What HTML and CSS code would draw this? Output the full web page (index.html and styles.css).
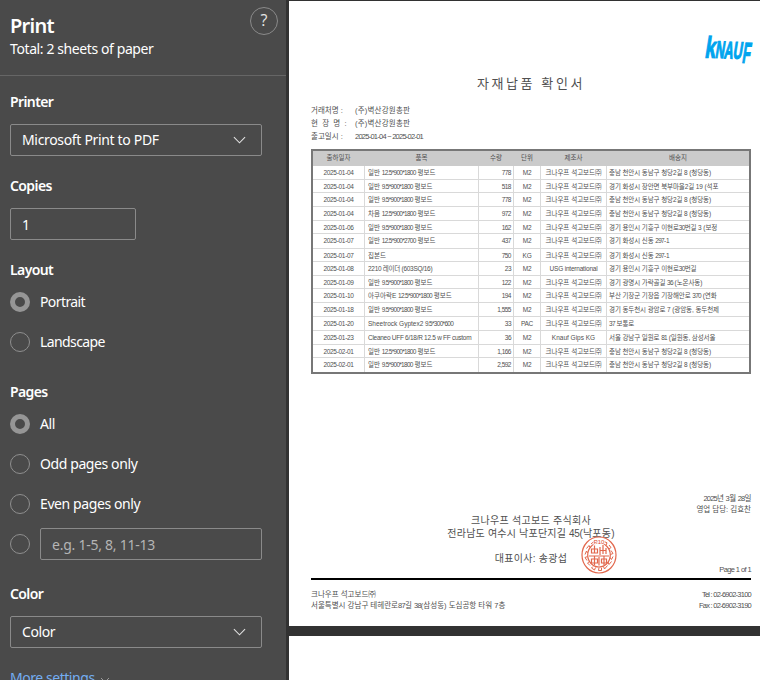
FILE: index.html
```html
<!DOCTYPE html>
<html lang="en">
<head>
<meta charset="utf-8">
<title>Print</title>
<link rel="stylesheet" href="styles.css">
</head>
<body>
<div class="dialog">
<aside class="panel">
  <header class="head">
    <div><h1>Print</h1><p class="total">Total: 2 sheets of paper</p></div>
    <button class="help">?</button>
  </header>
  <section class="group printer">
    <h2>Printer</h2>
    <div class="field select"><span class="v-printer">Microsoft Print to PDF</span><svg class="chev" viewBox="0 0 14 8"><path d="M1 1l6 6 6-6"/></svg></div>
  </section>
  <section class="group">
    <h2>Copies</h2>
    <div class="field copies">1</div>
  </section>
  <section class="group layout">
    <h2>Layout</h2>
    <label class="opt"><i class="radio on"></i><span>Portrait</span></label>
    <label class="opt"><i class="radio"></i><span>Landscape</span></label>
  </section>
  <section class="group pages">
    <h2>Pages</h2>
    <label class="opt"><i class="radio on"></i><span>All</span></label>
    <label class="opt"><i class="radio"></i><span>Odd pages only</span></label>
    <label class="opt"><i class="radio"></i><span>Even pages only</span></label>
    <label class="opt range"><i class="radio"></i><span class="field hint">e.g. 1-5, 8, 11-13</span></label>
  </section>
  <section class="group color">
    <h2>Color</h2>
    <div class="field select"><span>Color</span><svg class="chev" viewBox="0 0 14 8"><path d="M1 1l6 6 6-6"/></svg></div>
  </section>
  <a class="more">More settings <svg viewBox="0 0 10 6"><path d="M1 1l4 4 4-4"/></svg></a>
</aside>
<main class="preview">
  <article class="sheet">
    <div class="brand"><svg viewBox="0 0 50 34" width="50" height="34"><g transform="rotate(2) skewX(-7)"><text x="4" y="24.5" class="logo-k" textLength="10.5" lengthAdjust="spacingAndGlyphs">k</text><text x="14.5" y="24.5" class="logo-t" textLength="27" lengthAdjust="spacingAndGlyphs">NAU</text><text x="42" y="28.5" class="logo-f" textLength="8" lengthAdjust="spacingAndGlyphs">F</text></g></svg></div>
    <h3 class="title">자재납품 확인서</h3>
    <dl class="meta">
      <dt>거래처명 :</dt><dd>(주)벽산강원총판</dd>
      <dt class="wide">현 장 명 :</dt><dd>(주)벽산강원총판</dd>
      <dt>출고일시 :</dt><dd class="dates">2025-01-04 ~ 2025-02-01</dd>
    </dl>
    <div class="table">
      <div class="row th"><b>출하일자</b><b>품목</b><b>수량</b><b>단위</b><b>제조사</b><b>배송지</b></div>
      <div class="row"><span>2025-01-04</span><span>일반 <u>12.5*900*1800</u> 평보드</span><span>778</span><span>M2</span><span>크나우프 석고보드㈜</span><span>충남 천안시 동남구 청당2길 8 (청당동)</span></div>
      <div class="row s"><span>2025-01-04</span><span>일반 <u>9.5*900*1800</u> 평보드</span><span>518</span><span>M2</span><span>크나우프 석고보드㈜</span><span>경기 화성시 장안면 북부마을2길 19 (석포</span></div>
      <div class="row"><span>2025-01-04</span><span>일반 <u>9.5*900*1800</u> 평보드</span><span>778</span><span>M2</span><span>크나우프 석고보드㈜</span><span>충남 천안시 동남구 청당2길 8 (청당동)</span></div>
      <div class="row"><span>2025-01-04</span><span>차음 <u>12.5*900*1800</u> 평보드</span><span>972</span><span>M2</span><span>크나우프 석고보드㈜</span><span>충남 천안시 동남구 청당2길 8 (청당동)</span></div>
      <div class="row s"><span>2025-01-06</span><span>일반 <u>9.5*900*1800</u> 평보드</span><span>162</span><span>M2</span><span>크나우프 석고보드㈜</span><span>경기 용인시 기흥구 이현로<u>30</u>번길 3 (보정</span></div>
      <div class="row l"><span>2025-01-07</span><span>일반 <u>12.5*900*2700</u> 평보드</span><span>437</span><span>M2</span><span>크나우프 석고보드㈜</span><span>경기 화성시 신동 <u>297</u>-1</span></div>
      <div class="row s"><span>2025-01-07</span><span>집본드</span><span>750</span><span>KG</span><span>크나우프 석고보드㈜</span><span>경기 화성시 신동 <u>297</u>-1</span></div>
      <div class="row"><span>2025-01-08</span><span class="lat">2210 레이더 (603SQ/16)</span><span>23</span><span>M2</span><span class="usg">USG international</span><span>경기 용인시 기흥구 이현로<u>30</u>번길</span></div>
      <div class="row s"><span>2025-01-09</span><span>일반 <u>9.5*900*1800</u> 평보드</span><span>122</span><span>M2</span><span>크나우프 석고보드㈜</span><span>경기 광명시 가락골길 <u>36</u> (노온사동)</span></div>
      <div class="row"><span>2025-01-10</span><span>아쿠아락E <u>12.5*900*1800</u> 평보드</span><span>194</span><span>M2</span><span>크나우프 석고보드㈜</span><span>부산 기장군 기장읍 기장해안로 <u>370</u> (연화</span></div>
      <div class="row"><span>2025-01-18</span><span>일반 <u>9.5*900*1800</u> 평보드</span><span>1,555</span><span>M2</span><span>크나우프 석고보드㈜</span><span>경기 동두천시 광암로 7 (광암동, 동두천제</span></div>
      <div class="row"><span>2025-01-20</span><span>Sheetrock Gyptex2 <u>9.5*300*600</u></span><span>33</span><span>PAC</span><span>크나우프 석고보드㈜</span><span><u>37</u> 보통로</span></div>
      <div class="row"><span>2025-01-23</span><span class="lat">Cleaneo UFF 6/18/R 12.5 w FF custom</span><span>36</span><span>M2</span><span>Knauf Gips KG</span><span>서울 강남구 일원로 <u>81</u> (일원동, 삼성서울</span></div>
      <div class="row s"><span>2025-02-01</span><span>일반 <u>12.5*900*1800</u> 평보드</span><span>1,166</span><span>M2</span><span>크나우프 석고보드㈜</span><span>충남 천안시 동남구 청당2길 8 (청당동)</span></div>
      <div class="row"><span>2025-02-01</span><span>일반 <u>9.5*900*1800</u> 평보드</span><span>2,592</span><span>M2</span><span>크나우프 석고보드㈜</span><span>충남 천안시 동남구 청당2길 8 (청당동)</span></div>
    </div>
    <div class="issued"><p class="day"><u>2025</u>년 3월 <u>28</u>일</p><p>영업 담당: 김효찬</p></div>
    <div class="sign">
      <p>크나우프 석고보드 주식회사</p>
      <p class="site">전라남도 여수시 낙포단지길 <em>45</em>(낙포동)</p>
      <p class="ceo">대표이사: 송광섭</p>
      <svg class="stamp" viewBox="0 0 36 38">
        <ellipse cx="18" cy="19" rx="17" ry="18"/>
        <ellipse cx="18" cy="19" rx="11.3" ry="12"/>
        <path class="marks" d="M23 5.500l3 1.300-1 2.500M28 9l2 2.500-2 1.500M30 14.500l2 3-2.500 1M32 20.500l-1.500 3-1.500-2M30.500 25.500l-2.500 3-1-2.500M26.500 29.500l-3 3.500-1-2.500M20.500 32v2.500h-3l.5-3M14.500 31.500l-1 2.500-3-2 1.500-1.500M9 29.500l-2.500-2.500 2-1.500M6 24.500l-2-3 2.500-1M4 18.500l1.500-3.500 1 2M5.500 12.500l2.500-3 1 2M10 8l3-2.500.5 2.500"/>
        <path d="M10.500 13h6v4h-6zM13.500 9.500v7.500M19 11v8M22 9v9M25 12v6M19 14.500h6M8 20h20M10.500 23h6v4h-6zM18 21v8.500M20.500 23h5v4h-5zM13.500 20v9M23 20v9"/>
        <text x="18" y="7.700" text-anchor="middle">P10</text>
      </svg>
    </div>
    <p class="pageno">Page 1 of 1</p>
    <footer class="foot">
      <div class="addr"><p>크나우프 석고보드㈜</p><p>서울특별시 강남구 테헤란로<u>87</u>길 <u>38</u>(삼성동) 도심공항 타워 7층</p></div>
      <div class="tel"><p>Tel : 02-6902-3100</p><p>Fax : 02-6902-3190</p></div>
    </footer>
  </article>
  <article class="sheet next"></article>
</main>
</div>
</body>
</html>
```
FILE: styles.css
```css
* { box-sizing: border-box; margin: 0; padding: 0; }
html, body { height: 680px; overflow: hidden; }
body { background: #323232; }
p, h1, h2, h3, a { display: block; white-space: nowrap; }

.dialog { display: flex; width: 760px; height: 680px; overflow: hidden; }

/* settings panel */
.panel {
  width: 286px; height: 680px; flex: none; overflow: hidden;
  background: #4a4a4a; color: #fff;
  font: 14px/20px "Noto Sans", "Open Sans", sans-serif;
  letter-spacing: -0.4px;
}
.head {
  display: flex; justify-content: space-between;
  height: 76px; padding: 12px 8px 0 10px; border-bottom: 1px solid #666;
}
h1 { font-size: 20px; line-height: 28px; font-weight: 600; letter-spacing: -0.7px; }
.total { line-height: 18px; }
.help {
  width: 28px; height: 28px; margin-top: -5px; padding-bottom: 2px;
  border: 1px solid #8a8a8a; border-radius: 50%;
  background: none; color: #e6e6e6; font: 16px/22px "Open Sans", sans-serif;
}
.group { padding: 0 24px 0 10px; margin-top: 20px; }
.printer { margin-top: 16px; }
h2 { font-size: 14px; line-height: 20px; font-weight: 600; letter-spacing: -0.6px; }
.field {
  display: flex; align-items: center; height: 32px; margin-top: 12px;
  padding: 0 11px; border: 1px solid #8a8a8a; border-radius: 2px;
}
.select { justify-content: space-between; padding-right: 15px; }
.v-printer { letter-spacing: -0.33px; }
.chev { width: 13px; height: 8px; fill: none; stroke: #e0e0e0; stroke-width: 1.2; }
.copies { width: 126px; padding-top: 1px; }
.opt { display: flex; align-items: center; gap: 10px; height: 20px; margin-top: 20px; }
.layout .opt { letter-spacing: -0.6px; }
h2 + .opt { margin-top: 12px; }
.radio { width: 20px; height: 20px; flex: none; border: 1px solid #8f8f8f; border-radius: 50%; }
.radio.on { border: 5px solid #969696; }
.pages { margin-top: 30px; }
.range { height: 32px; margin-top: 14px; }
.hint { flex: 1; margin-top: 0; padding-top: 1px; color: #b5b5b5; letter-spacing: -0.25px; }
.color { margin-top: 24px; }
.more { padding: 0 10px; margin-top: 20px; color: #74aef2; letter-spacing: -0.45px; }
.more svg { width: 10px; height: 6px; margin-left: 2px; fill: none; stroke: #9a9a9a; }

/* print preview */
.preview {
  flex: 1; padding: 1px 0 0 3px; color: #505050;
  font: 6.5px/13px "Liberation Sans", "Noto Sans CJK KR", sans-serif;
}
u { text-decoration: none; letter-spacing: -0.7px; }
.sheet { height: 625px; padding: 0 9px 0 22px; background: #fff; overflow: hidden; }
.sheet.next { margin-top: 10px; }
.brand { display: flex; justify-content: flex-end; height: 74px; padding-top: 32px; margin-right: -3px; }
.brand svg { overflow: visible; }
.brand text { fill: #00a4ee; stroke: #00a4ee; stroke-width: 1.2; font-family: "Liberation Sans", sans-serif; font-weight: 700; }
.logo-k { font-size: 30px; }
.logo-t { font-size: 24px; }
.logo-f { font-size: 29px; }
.title { text-align: center; font-size: 13px; line-height: 18px; font-weight: 400; letter-spacing: 2.6px; }
.meta {
  display: grid; grid-template-columns: 44px 1fr; align-content: start;
  height: 56px; padding-top: 11px;
  font-size: 7.5px; line-height: 13px; white-space: nowrap;
}
.meta dd { letter-spacing: 0.2px; }
.wide { word-spacing: 2.2px; }
.meta .dates { letter-spacing: -0.75px; }

.table { border: 2px solid #777; width: 440px; }
.row {
  display: grid; grid-template-columns: 52px 114px 35px 27px 66px 142px;
  height: 14px; line-height: 14px; border-bottom: 1px solid #d9d9d9; white-space: nowrap;
}
.row.s { height: 13px; }
.row.l { height: 15px; }
.row:last-child { border-bottom: 0; }
.row > * { font-weight: 400; text-align: center; border-right: 1px solid #d9d9d9; overflow: hidden; }
.row > :last-child { border-right: 0; }
.row span:first-child { letter-spacing: -0.3px; }
.row span:nth-child(2) { text-align: left; padding-left: 3px; }
.row span:nth-child(3) { text-align: right; padding-right: 2px; letter-spacing: -0.5px; }
.row span:nth-child(4) { letter-spacing: -0.3px; }
.row span:nth-child(6) { text-align: left; padding-left: 2px; letter-spacing: -0.1px; }
.row.th { height: 15px; line-height: 14px; background: #cbcbcb; border-color: #cbcbcb; }
.th b { border-color: #cbcbcb; }
.row span.lat { letter-spacing: -0.28px; }
.row .usg { letter-spacing: -0.2px; }

.issued { margin-top: 119px; text-align: right; font-size: 7.5px; line-height: 11px; }
.day { letter-spacing: -0.3px; }
.day u { letter-spacing: -0.8px; }
.sign {
  position: relative; height: 50px; margin-top: -1px; text-align: center;
  font-size: 10px; line-height: 13px; letter-spacing: 0.3px;
}
.site { letter-spacing: 0.2px; }
.sign em { font-style: normal; letter-spacing: -0.4px; }
.ceo { margin-top: 12px; }
.stamp { position: absolute; left: 270px; top: 22px; width: 36px; height: 38px; fill: none; stroke: #e2674c; stroke-width: 1.2; }
.stamp .marks { stroke-width: 1; }
.stamp text { fill: #d9492c; stroke: #fff; stroke-width: 1.5; paint-order: stroke; font-size: 6px; letter-spacing: 0; }
.pageno { margin-top: -1px; text-align: right; font-size: 7.5px; line-height: 13px; letter-spacing: -0.6px; }
.foot {
  display: flex; justify-content: space-between; border-top: 2px solid #000;
  margin-top: 2px; height: 40px; padding-top: 9px; font-size: 7.5px; line-height: 11px;
}
.tel { text-align: right; letter-spacing: -0.75px; }
```
